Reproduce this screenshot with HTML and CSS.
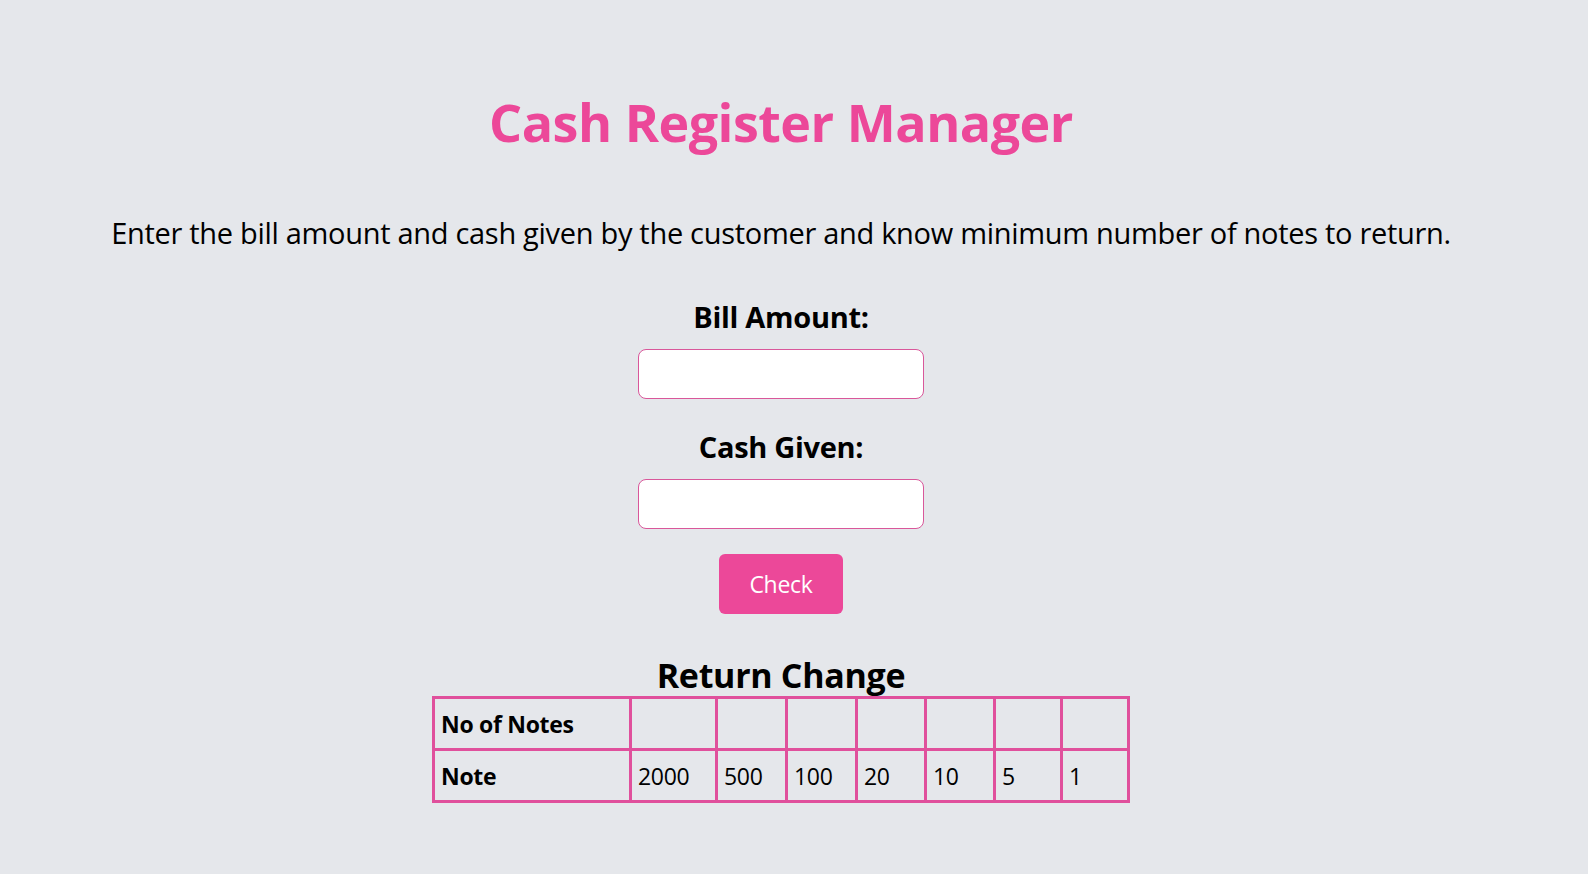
FILE: index.html
```html
<!DOCTYPE html>
<html lang="en">
<head>
<meta charset="utf-8">
<title>Cash Register Manager</title>
<link rel="stylesheet" href="styles.css">
</head>
<body>
<main class="app">
  <h1 class="title">Cash Register Manager</h1>
  <p class="intro">Enter the bill amount and cash given by the customer and know minimum number of notes to return.</p>
  <label class="field-label" for="bill">Bill Amount:</label>
  <input class="field" id="bill" type="number">
  <label class="field-label" for="cash">Cash Given:</label>
  <input class="field" id="cash" type="number">
  <button class="check-btn" type="button">Check</button>
  <h2 class="change-title">Return Change</h2>
  <table class="change-table">
    <tr>
      <th class="head-cell">No of Notes</th>
      <td class="c1"></td><td class="c2"></td><td class="c3"></td><td class="c4"></td><td class="c5"></td><td class="c6"></td><td class="c7"></td>
    </tr>
    <tr>
      <th class="head-cell">Note</th>
      <td class="c1">2000</td><td class="c2">500</td><td class="c3">100</td><td class="c4">20</td><td class="c5">10</td><td class="c6">5</td><td class="c7">1</td>
    </tr>
  </table>
</main>
</body>
</html>
```

FILE: styles.css
```css
html, body {
  margin: 0;
  padding: 0;
  background: #e5e7eb;
}
body {
  font-family: "Open Sans", "Noto Sans", sans-serif;
  color: #000;
  padding-right: 26px;
}
.app {
  display: flex;
  flex-direction: column;
  align-items: center;
  text-align: center;
}
.title {
  margin: 86px 0 0;
  font-size: 52px;
  line-height: 72px;
  font-weight: 700;
  color: #ec4899;
  letter-spacing: -0.5px;
}
.intro {
  margin: 53px 0 0;
  font-size: 29px;
  line-height: 44px;
  letter-spacing: -0.3px;
}
.field-label {
  display: block;
  margin-top: 44px;
  font-size: 29px;
  line-height: 36px;
  font-weight: 700;
  letter-spacing: -0.3px;
}
.field {
  box-sizing: border-box;
  width: 286px;
  height: 50px;
  margin-top: 14px;
  border: 1px solid #d9579a;
  border-radius: 8px;
  background: #fff;
  font: inherit;
  font-size: 20px;
  padding: 0 10px;
}
.field + .field-label {
  margin-top: 30px;
}
.check-btn {
  margin-top: 25px;
  width: 124px;
  height: 60px;
  border: none;
  border-radius: 6px;
  background: #ec4899;
  color: #fff;
  font-family: inherit;
  font-size: 23px;
  letter-spacing: -0.3px;
}
.change-title {
  margin: 40px 0 0;
  font-size: 34px;
  line-height: 42px;
  font-weight: 700;
  letter-spacing: -0.3px;
}
.change-table {
  margin-top: 0;
  border-collapse: collapse;
  border: 3px solid #e0509c;
  text-align: left;
  font-size: 23px;
}
.change-table th,
.change-table td {
  border: 3px solid #e0509c;
  height: 49px;
  padding: 0 6px;
  vertical-align: middle;
  letter-spacing: -0.3px;
}
.change-table th {
  font-weight: 700;
  width: 182px;
}
.change-table td { font-weight: 400; }
.change-table .c1 { width: 71px; }
.change-table .c2, .change-table .c3 { width: 55px; }
.change-table .c4, .change-table .c5 { width: 54px; }
.change-table .c6, .change-table .c7 { width: 52px; }
```
